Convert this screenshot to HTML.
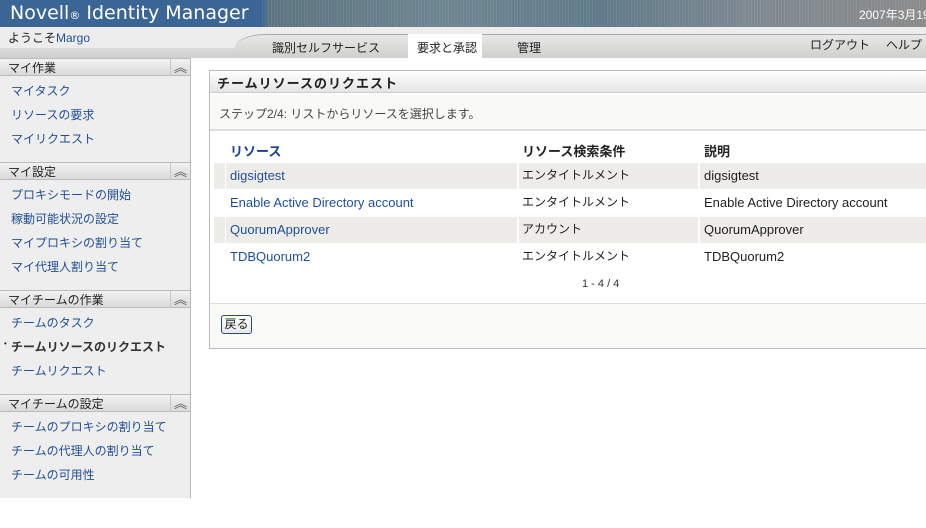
<!DOCTYPE html>
<html><head><meta charset="utf-8"><style>
*{margin:0;padding:0;box-sizing:border-box}
body{width:926px;height:528px;overflow:hidden;background:#fff;font-family:"Liberation Sans","Noto Sans CJK JP",sans-serif;font-size:12px;color:#222;position:relative}
.a{position:absolute;white-space:nowrap}
.lnk{color:#1f4f9a}
.hd{background:linear-gradient(#f2f2f2,#d9d9d9);border-top:1px solid #bbb;border-bottom:1px solid #bbb;height:18px;width:190px;left:0}
.hd span{position:absolute;left:8px;top:0}
.hd i{position:absolute;left:170px;top:0;width:20px;height:17px;border-left:1px solid #c8c8c8;font-style:normal;text-align:center;color:#555;font-size:13px;line-height:17px}
.row{position:absolute;left:214px;height:26px}
.c{position:absolute;top:0;height:26px}
.l{font-size:13px}
</style></head><body>
<div class="a" style="left:0;top:0;width:926px;height:27px;background:linear-gradient(90deg,#3a6595 0,#3a6595 262px,#5c7480 270px,#6d8590 450px,#5f7a88 600px,#7d8890 750px,#8a8a8a 926px)"></div>
<div class="a" style="left:262px;top:0;width:664px;height:27px;background:repeating-linear-gradient(90deg,rgba(255,255,255,.08) 0 1px,transparent 1px 3px)"></div>
<div class="a" style="left:10px;top:2px;color:#fff;font-size:19px;font-family:'DejaVu Sans',sans-serif">Novell<span style="font-size:11px">®</span> Identity Manager</div>
<div class="a" style="left:859px;top:6px;color:#fff;font-size:12px">2007年3月19日</div>
<div class="a" style="left:0;top:27px;width:926px;height:31px;background:#ededed;border-bottom:1px solid #ccc"></div>
<div class="a" style="left:0;top:48px;width:240px;height:10px;background:linear-gradient(#dcdcdc,#cfcfcf)"></div>
<div class="a" style="left:8px;top:29px;font-size:12px">ようこそ<span class="lnk">Margo</span></div>
<div class="a" style="left:235px;top:34px;width:691px;height:24px;background:linear-gradient(#e8e8e8,#cfcfcc);border-top:1px solid #aaa;border-top-left-radius:30px 14px"></div>
<div class="a" style="left:408px;top:34px;width:74px;height:24px;background:#fff"></div>
<div class="a" style="left:272px;top:39px">識別セルフサービス</div>
<div class="a" style="left:417px;top:39px">要求と承認</div>
<div class="a" style="left:517px;top:39px">管理</div>
<div class="a" style="left:810px;top:36px">ログアウト</div>
<div class="a" style="left:886px;top:36px">ヘルプ</div>
<div class="a" style="left:0;top:58px;width:191px;height:440px;background:#eeeeee;border-right:1px solid #bbb"></div>
<div class="a hd" style="top:58px"><span>マイ作業</span><i>︽</i></div>
<div class="a lnk" style="left:11px;top:82px">マイタスク</div>
<div class="a lnk" style="left:11px;top:106px">リソースの要求</div>
<div class="a lnk" style="left:11px;top:130px">マイリクエスト</div>
<div class="a hd" style="top:162px"><span>マイ設定</span><i>︽</i></div>
<div class="a lnk" style="left:11px;top:186px">プロキシモードの開始</div>
<div class="a lnk" style="left:11px;top:210px">稼動可能状況の設定</div>
<div class="a lnk" style="left:11px;top:234px">マイプロキシの割り当て</div>
<div class="a lnk" style="left:11px;top:258px">マイ代理人割り当て</div>
<div class="a hd" style="top:290px"><span>マイチームの作業</span><i>︽</i></div>
<div class="a lnk" style="left:11px;top:314px">チームのタスク</div>
<div class="a" style="left:4px;top:339px;font-size:8px">•</div>
<div class="a" style="left:11px;top:338px;font-weight:bold;color:#333">チームリソースのリクエスト</div>
<div class="a lnk" style="left:11px;top:362px">チームリクエスト</div>
<div class="a hd" style="top:394px"><span>マイチームの設定</span><i>︽</i></div>
<div class="a lnk" style="left:11px;top:418px">チームのプロキシの割り当て</div>
<div class="a lnk" style="left:11px;top:442px">チームの代理人の割り当て</div>
<div class="a lnk" style="left:11px;top:466px">チームの可用性</div>
<div class="a" style="left:209px;top:70px;width:720px;height:279px;border:1px solid #bbb;background:#fff"></div>
<div class="a" style="left:210px;top:71px;width:716px;height:22px;background:linear-gradient(#fff,#e4e4e4);border-bottom:1px solid #ccc"></div>
<div class="a" style="left:217px;top:73px;font-weight:bold;font-size:13px;letter-spacing:1px">チームリソースのリクエスト</div>
<div class="a" style="left:210px;top:94px;width:716px;height:37px;background:#f9f9f7;border-bottom:2px solid #ddd"></div>
<div class="a" style="left:219px;top:105px;color:#444">ステップ2/4: リストからリソースを選択します。</div>
<div class="a" style="left:230px;top:141px;font-weight:bold;font-size:13px;color:#1a3f99">リソース</div>
<div class="a" style="left:522px;top:141px;font-weight:bold;font-size:13px">リソース検索条件</div>
<div class="a" style="left:704px;top:141px;font-weight:bold;font-size:13px">説明</div>
<div class="row" style="top:163px;width:712px"><div class="c" style="left:0;width:11px;background:#eeece8"></div><div class="c" style="left:12px;width:291px;background:#eeece8"></div><div class="c" style="left:305px;width:179px;background:#eeece8"></div><div class="c" style="left:486px;width:226px;background:#eeece8"></div></div>
<div class="row" style="top:217px;width:712px"><div class="c" style="left:0;width:11px;background:#eeece8"></div><div class="c" style="left:12px;width:291px;background:#eeece8"></div><div class="c" style="left:305px;width:179px;background:#eeece8"></div><div class="c" style="left:486px;width:226px;background:#eeece8"></div></div>
<div class="a lnk l" style="left:230px;top:168px">digsigtest</div>
<div class="a" style="left:522px;top:166px">エンタイトルメント</div>
<div class="a l" style="left:704px;top:168px">digsigtest</div>
<div class="a lnk l" style="left:230px;top:195px">Enable Active Directory account</div>
<div class="a" style="left:522px;top:193px">エンタイトルメント</div>
<div class="a l" style="left:704px;top:195px">Enable Active Directory account</div>
<div class="a lnk l" style="left:230px;top:222px">QuorumApprover</div>
<div class="a" style="left:522px;top:220px">アカウント</div>
<div class="a l" style="left:704px;top:222px">QuorumApprover</div>
<div class="a lnk l" style="left:230px;top:249px">TDBQuorum2</div>
<div class="a" style="left:522px;top:247px">エンタイトルメント</div>
<div class="a l" style="left:704px;top:249px">TDBQuorum2</div>
<div class="a" style="left:582px;top:278px;font-size:11px;color:#333">1 - 4 / 4</div>
<div class="a" style="left:210px;top:303px;width:716px;height:45px;background:#fafaf8;border-top:1px solid #ddd"></div>
<div class="a" style="left:221px;top:315px;width:31px;height:19px;border:1px solid #2a4a7a;border-radius:3px;background:linear-gradient(#fff,#e8e8e8);text-align:center;line-height:16px;font-size:12px">戻る</div>
</body></html>
